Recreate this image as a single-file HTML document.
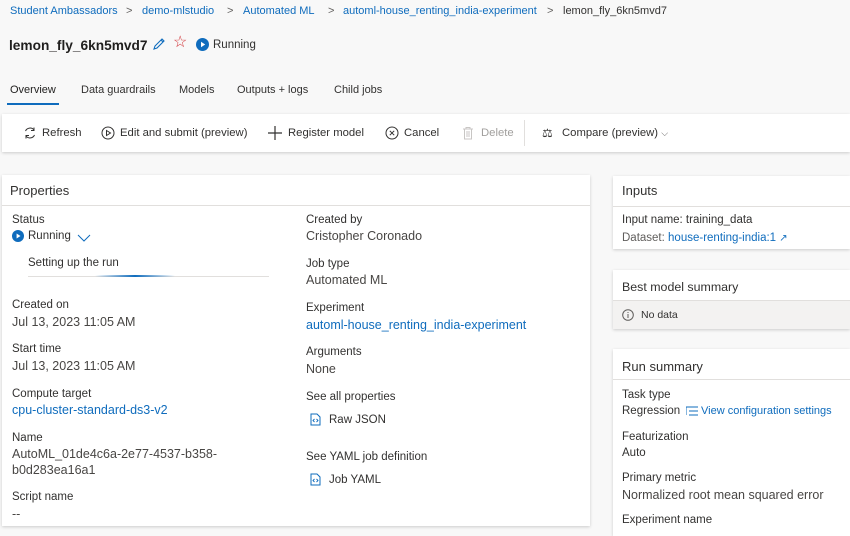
<!DOCTYPE html>
<html><head><meta charset="utf-8"><style>
*{margin:0;padding:0;box-sizing:border-box}
body{width:850px;height:536px;overflow:hidden;background:#f8f8f8;font-family:"Liberation Sans",sans-serif;color:#323130;position:relative}
.a{position:absolute;white-space:nowrap;line-height:16px;margin-top:1px}
.l{font-size:11.5px;color:#323130}
.v{font-size:12.5px;color:#484644}
.b{color:#0f6cbd}
.card{position:absolute;background:#fff;box-shadow:0 1px 3px rgba(0,0,0,.18)}
.hd{position:absolute;left:0;right:0;top:0;border-bottom:1px solid #e1dfdd}
.tb{font-size:11.3px;color:#323130}
.bc{font-size:11px}
</style></head><body>
<div class="a b bc" style="left:10px;top:2px">Student Ambassadors</div>
<div class="a" style="left:126px;top:2px;font-size:11px;color:#605e5c">&gt;</div>
<div class="a b bc" style="left:142px;top:2px">demo-mlstudio</div>
<div class="a" style="left:227px;top:2px;font-size:11px;color:#605e5c">&gt;</div>
<div class="a b bc" style="left:243px;top:2px">Automated ML</div>
<div class="a" style="left:328px;top:2px;font-size:11px;color:#605e5c">&gt;</div>
<div class="a b bc" style="left:343px;top:2px">automl-house_renting_india-experiment</div>
<div class="a" style="left:547px;top:2px;font-size:11px;color:#605e5c">&gt;</div>
<div class="a bc" style="left:563px;top:2px">lemon_fly_6kn5mvd7</div>

<div class="a" style="left:9px;top:36px;font-size:13.7px;font-weight:bold;color:#201f1e;line-height:18px">lemon_fly_6kn5mvd7</div>
<svg class="a" style="left:152px;top:36px" width="14" height="14" viewBox="0 0 14 14"><path d="M2 12 L3 9 L10 2 L12 4 L5 11 Z M9 3 L11 5" fill="none" stroke="#0f6cbd" stroke-width="1.1"/></svg>
<div class="a" style="left:173px;top:34px;font-size:16px;color:#d13438">☆</div>
<svg class="a" style="left:196px;top:37px" width="13" height="13"><circle cx="6.5" cy="6.5" r="6.5" fill="#0f6cbd"/><path d="M5 3.8 L9.2 6.5 L5 9.2Z" fill="#fff"/></svg>
<div class="a" style="left:213px;top:36px;font-size:11.5px">Running</div>

<div class="a" style="left:10px;top:81px;font-size:11px;color:#201f1e">Overview</div>
<div style="position:absolute;left:7px;top:103px;width:52px;height:2px;background:#0f6cbd"></div>
<div class="a" style="left:81px;top:81px;font-size:11px">Data guardrails</div>
<div class="a" style="left:179px;top:81px;font-size:11px">Models</div>
<div class="a" style="left:237px;top:81px;font-size:11px">Outputs + logs</div>
<div class="a" style="left:334px;top:81px;font-size:11px">Child jobs</div>

<div class="card" style="left:2px;top:114px;width:848px;height:38px"></div>
<svg class="a" style="left:23px;top:125px" width="14" height="14" viewBox="0 0 14 14"><path d="M11 4 A5 5 0 0 0 2.5 5 M3 10 A5 5 0 0 0 11.5 9 M11 1.5 V4.5 H8 M3 12.5 V9.5 H6" fill="none" stroke="#323130" stroke-width="1"/></svg>
<div class="a tb" style="left:42px;top:124px">Refresh</div>
<svg class="a" style="left:101px;top:125px" width="14" height="14"><circle cx="7" cy="7" r="6" fill="none" stroke="#323130"/><path d="M5.5 4.5 L9.5 7 L5.5 9.5Z" fill="none" stroke="#323130"/></svg>
<div class="a tb" style="left:120px;top:124px">Edit and submit (preview)</div>
<svg class="a" style="left:268px;top:125px" width="14" height="14"><path d="M7 0 V14 M0 7 H14" stroke="#323130" stroke-width="1.2"/></svg>
<div class="a tb" style="left:288px;top:124px">Register model</div>
<svg class="a" style="left:385px;top:125px" width="14" height="14"><circle cx="7" cy="7" r="6" fill="none" stroke="#323130"/><path d="M4.8 4.8 L9.2 9.2 M9.2 4.8 L4.8 9.2" stroke="#323130"/></svg>
<div class="a tb" style="left:404px;top:124px">Cancel</div>
<svg class="a" style="left:462px;top:125px" width="12" height="14"><path d="M1 3 H11 M4 3 V1.5 H8 V3 M2.5 3 V13 H9.5 V3 M5 5 V11 M7 5 V11" fill="none" stroke="#c8c6c4"/></svg>
<div class="a tb" style="left:481px;top:124px;color:#a19f9d">Delete</div>
<div style="position:absolute;left:524px;top:120px;width:1px;height:26px;background:#e1dfdd"></div>
<div class="a" style="left:542px;top:124px;font-size:12px">⚖</div>
<div class="a tb" style="left:562px;top:124px">Compare (preview) <span style="font-size:9px;color:#605e5c">⌵</span></div>

<div class="card" style="left:2px;top:175px;width:588px;height:351px"><div class="hd" style="height:31px"></div></div>
<div class="a" style="left:10px;top:182px;font-size:13px">Properties</div>
<div class="a l" style="left:12px;top:211px">Status</div>
<svg class="a" style="left:12px;top:229px" width="12" height="12"><circle cx="6" cy="6" r="6" fill="#0f6cbd"/><path d="M4.6 3.5 L8.5 6 L4.6 8.5Z" fill="#fff"/></svg>
<div class="a l" style="left:28px;top:227px">Running</div>
<svg class="a" style="left:77px;top:233px" width="14" height="8"><path d="M1 1 L7 7 L13 1" fill="none" stroke="#0f6cbd"/></svg>
<div class="a l" style="left:28px;top:254px">Setting up the run</div>
<div style="position:absolute;left:28px;top:276px;width:241px;height:1px;background:#e1dfdd"></div>
<div style="position:absolute;left:95px;top:275px;width:80px;height:2px;background:linear-gradient(90deg,rgba(15,108,189,0),#0f6cbd,rgba(15,108,189,0))"></div>
<div class="a l" style="left:12px;top:296px">Created on</div>
<div class="a v" style="left:12px;top:313px">Jul 13, 2023 11:05 AM</div>
<div class="a l" style="left:12px;top:340px">Start time</div>
<div class="a v" style="left:12px;top:357px">Jul 13, 2023 11:05 AM</div>
<div class="a l" style="left:12px;top:385px">Compute target</div>
<div class="a v b" style="left:12px;top:401px">cpu-cluster-standard-ds3-v2</div>
<div class="a l" style="left:12px;top:429px">Name</div>
<div class="a v" style="left:12px;top:445px">AutoML_01de4c6a-2e77-4537-b358-</div>
<div class="a v" style="left:12px;top:461px">b0d283ea16a1</div>
<div class="a l" style="left:12px;top:488px">Script name</div>
<div class="a v" style="left:12px;top:505px">--</div>

<div class="a l" style="left:306px;top:211px">Created by</div>
<div class="a v" style="left:306px;top:227px">Cristopher Coronado</div>
<div class="a l" style="left:306px;top:255px">Job type</div>
<div class="a v" style="left:306px;top:271px">Automated ML</div>
<div class="a l" style="left:306px;top:299px">Experiment</div>
<div class="a v b" style="left:306px;top:316px">automl-house_renting_india-experiment</div>
<div class="a l" style="left:306px;top:343px">Arguments</div>
<div class="a v" style="left:306px;top:360px">None</div>
<div class="a l" style="left:306px;top:388px">See all properties</div>
<svg class="a" style="left:310px;top:412px" width="11" height="13"><path d="M1 1 H7 L10 4 V12 H1Z" fill="none" stroke="#0f6cbd"/><path d="M4.5 6 L3 7.5 L4.5 9 M6.5 6 L8 7.5 L6.5 9" fill="none" stroke="#0f6cbd" stroke-width=".9"/></svg>
<div class="a l" style="left:329px;top:411px">Raw JSON</div>
<div class="a l" style="left:306px;top:448px">See YAML job definition</div>
<svg class="a" style="left:310px;top:472px" width="11" height="13"><path d="M1 1 H7 L10 4 V12 H1Z" fill="none" stroke="#0f6cbd"/><path d="M4.5 6 L3 7.5 L4.5 9 M6.5 6 L8 7.5 L6.5 9" fill="none" stroke="#0f6cbd" stroke-width=".9"/></svg>
<div class="a l" style="left:329px;top:471px">Job YAML</div>

<div class="card" style="left:613px;top:176px;width:237px;height:73px"><div class="hd" style="height:31px"></div></div>
<div class="a" style="left:622px;top:182px;font-size:13px">Inputs</div>
<div class="a l" style="left:622px;top:211px">Input name: training_data</div>
<div class="a l" style="left:622px;top:229px;color:#605e5c">Dataset: <span class="b">house-renting-india:1</span> <span class="b" style="font-size:10px">↗</span></div>

<div class="card" style="left:613px;top:270px;width:237px;height:59px"><div class="hd" style="height:31px"></div><div style="position:absolute;left:0;right:0;top:31px;bottom:0;background:#f3f2f1"></div></div>
<div class="a" style="left:622px;top:278px;font-size:12.4px">Best model summary</div>
<svg class="a" style="left:622px;top:308px" width="12" height="12"><circle cx="6" cy="6" r="5.3" fill="none" stroke="#605e5c"/><path d="M6 5 V9 M6 3 V4" stroke="#605e5c"/></svg>
<div class="a" style="left:641px;top:306px;font-size:10.5px">No data</div>

<div class="card" style="left:613px;top:349px;width:237px;height:187px"><div class="hd" style="height:31px"></div></div>
<div class="a" style="left:622px;top:358px;font-size:13px">Run summary</div>
<div class="a l" style="left:622px;top:386px">Task type</div>
<div class="a l" style="left:622px;top:402px">Regression</div>
<svg class="a" style="left:686px;top:405px" width="12" height="10"><path d="M0 1 H12 M3 5 H12 M3 9 H12 M0 1 V9" stroke="#0f6cbd"/></svg>
<div class="a b" style="left:701px;top:402px;font-size:11px">View configuration settings</div>
<div class="a l" style="left:622px;top:428px">Featurization</div>
<div class="a l" style="left:622px;top:444px">Auto</div>
<div class="a l" style="left:622px;top:469px">Primary metric</div>
<div class="a v" style="left:622px;top:486px">Normalized root mean squared error</div>
<div class="a l" style="left:622px;top:511px">Experiment name</div>
</body></html>
